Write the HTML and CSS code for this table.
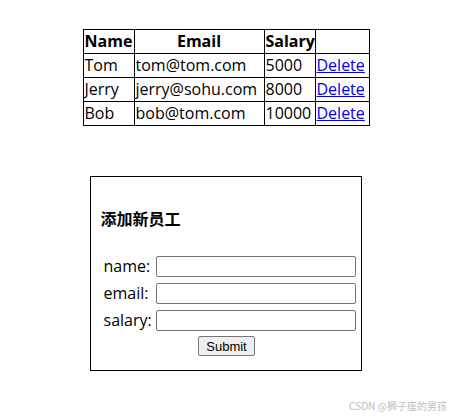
FILE: index.html
```html
<!DOCTYPE html>
<html>
<head>
<meta charset="utf-8">
<link rel="stylesheet" href="styles.css">
</head>
<body>
<div class="page">
  <table class="emp">
    <colgroup>
      <col class="c-name"><col class="c-email"><col class="c-salary"><col class="c-act">
    </colgroup>
    <tr><th>Name</th><th>Email</th><th>Salary</th><th></th></tr>
    <tr><td>Tom</td><td>tom@tom.com</td><td>5000</td><td><a href="#">Delete</a></td></tr>
    <tr><td>Jerry</td><td>jerry@sohu.com</td><td>8000</td><td><a href="#">Delete</a></td></tr>
    <tr><td>Bob</td><td>bob@tom.com</td><td>10000</td><td><a href="#">Delete</a></td></tr>
  </table>

  <div class="box">
    <h4 class="title">添加新员工</h4>
    <div class="form">
      <label class="lbl">name:</label><input class="field" type="text">
      <label class="lbl">email:</label><input class="field" type="text">
      <label class="lbl">salary:</label><input class="field" type="text">
    </div>
    <div class="actions"><button class="submit">Submit</button></div>
  </div>
</div>
<div class="wm">CSDN @狮子座的男孩</div>
</body>
</html>
```

FILE: styles.css
```css
html, body {
  margin: 0;
  padding: 0;
  background: #fff;
}
body {
  font-family: "Open Sans", "Noto Sans CJK SC", sans-serif;
  font-size: 16px;
  color: #000;
  width: 451px;
  height: 417px;
  position: relative;
  overflow: hidden;
}
.page {
  padding-top: 29px;
  display: flex;
  flex-direction: column;
  align-items: center;
}
.emp {
  border-collapse: collapse;
  border: 1px solid #000;
  table-layout: fixed;
  width: 287px;
  margin-left: 1px;
}
.c-name { width: 51px; }
.c-email { width: 130px; }
.c-salary { width: 51px; }
.c-act { width: 54px; }
.emp th, .emp td {
  border: 1px solid #000;
  padding: 1px 1px;
  line-height: 21px;
  white-space: nowrap;
  overflow: hidden;
}
.emp th {
  font-weight: bold;
  text-align: center;
}
.emp td {
  text-align: left;
}
.emp a {
  color: #0000ee;
  text-decoration: underline;
}
.box {
  margin-top: 50px;
  width: 250px;
  border: 1px solid #000;
  padding: 10px 10px 14px 10px;
}
.title {
  font-family: "Noto Sans CJK SC", sans-serif;
  font-size: 16px;
  font-weight: bold;
  line-height: 21px;
  margin: 21px 0 27px 0;
}
.form {
  display: grid;
  grid-template-columns: auto 200px;
  column-gap: 4px;
  row-gap: 6px;
  padding-left: 3px;
  align-items: center;
}
.lbl {
  line-height: 21px;
}
.field {
  box-sizing: border-box;
  width: 200px;
  height: 21px;
  border: 1px solid #767676;
  border-radius: 2px;
  padding: 0 2px;
  margin: 0;
  background: #fff;
}
.actions {
  display: flex;
  justify-content: center;
  margin-top: 5px;
  padding-left: 2px;
}
.submit {
  box-sizing: border-box;
  height: 20px;
  width: 57px;
  padding: 0;
  font-family: "Liberation Sans", Arial, sans-serif;
  font-size: 13px;
  color: #000;
  background: #efefef;
  border: 1px solid #767676;
  border-radius: 2px;
}
.wm {
  position: absolute;
  right: 4px;
  top: 399px;
  font-family: "Noto Sans CJK SC", sans-serif;
  font-size: 10px;
  line-height: 14px;
  color: #bdbdbd;
}
```
